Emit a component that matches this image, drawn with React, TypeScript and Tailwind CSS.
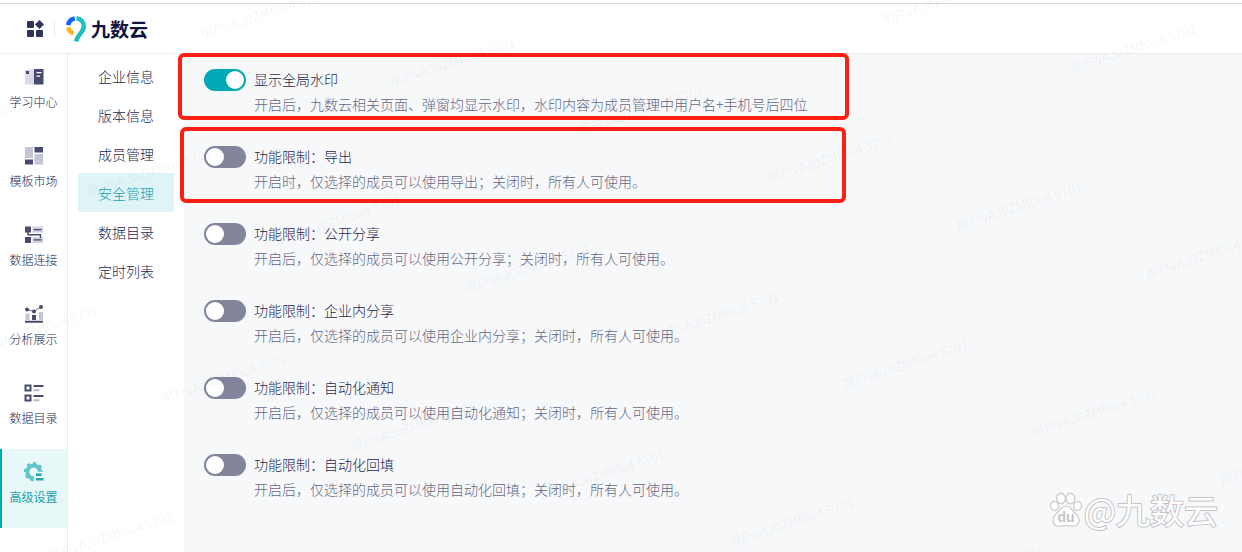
import { useState } from 'react';
import type { ReactNode } from 'react';

interface Setting {
  id: string;
  title: string;
  desc: string;
}

const settings: Setting[] = [
  { id: 'watermark', title: '显示全局水印', desc: '开启后，九数云相关页面、弹窗均显示水印，水印内容为成员管理中用户名+手机号后四位' },
  { id: 'export', title: '功能限制：导出', desc: '开启时，仅选择的成员可以使用导出；关闭时，所有人可使用。' },
  { id: 'public-share', title: '功能限制：公开分享', desc: '开启后，仅选择的成员可以使用公开分享；关闭时，所有人可使用。' },
  { id: 'inner-share', title: '功能限制：企业内分享', desc: '开启后，仅选择的成员可以使用企业内分享；关闭时，所有人可使用。' },
  { id: 'auto-notice', title: '功能限制：自动化通知', desc: '开启后，仅选择的成员可以使用自动化通知；关闭时，所有人可使用。' },
  { id: 'auto-fill', title: '功能限制：自动化回填', desc: '开启后，仅选择的成员可以使用自动化回填；关闭时，所有人可使用。' },
];

const menu = ['企业信息', '版本信息', '成员管理', '安全管理', '数据目录', '定时列表'];

function Icon({ children }: { children: ReactNode }) {
  return (
    <svg viewBox="0 0 20 20" className="h-5 w-5" aria-hidden="true">
      {children}
    </svg>
  );
}

const modules: { name: string; icon: ReactNode }[] = [
  {
    name: '学习中心',
    icon: (
      <Icon>
        <path fill="#d9dae8" d="M1 2.5h9v15H1z" />
        <path fill="#484b6e" d="M2 4h3v3H2zM10 2h9.500v15.500H10z" />
        <path fill="#fff" d="M12.500 5h5v1.300h-5zM12.500 8.500h3.500v1.300h-3.500z" />
      </Icon>
    ),
  },
  {
    name: '模板市场',
    icon: (
      <Icon>
        <path fill="#c3c4d4" d="M1 1h8v11H1zM10.500 8H19v10.500h-8.500z" />
        <path fill="#484b6e" d="M10.500 1H19v5.500h-8.500zM1 13.500h8v5H1z" />
      </Icon>
    ),
  },
  {
    name: '数据连接',
    icon: (
      <Icon>
        <path fill="#d0d1df" d="M8.500 1.500H19v6H8.500zM8.500 12H19v6H8.500z" />
        <path fill="#484b6e" d="M1 1.500h6v6H1zM1 12h6v6H1zM9.500 4h8v1.300h-8zM9.500 14.300h8v1.300h-8z" />
        <path fill="none" stroke="#484b6e" strokeWidth="1.400" d="M4 7v2.800h12.500V13" />
      </Icon>
    ),
  },
  {
    name: '分析展示',
    icon: (
      <Icon>
        <path fill="#c3c4d4" d="M1.500 9.500h4V16h-4zM15 8h4v8h-4z" />
        <path fill="#484b6e" d="M8 11h4v5H8zM1 16.800h18v2H1z" />
        <path fill="none" stroke="#74768f" strokeWidth="1" d="M3 5.500 10 7.500 17 3" />
        <g fill="#484b6e">
          <circle cx="3" cy="5.500" r="2" />
          <circle cx="10" cy="7.500" r="2" />
          <circle cx="17" cy="3" r="2" />
        </g>
      </Icon>
    ),
  },
  {
    name: '数据目录',
    icon: (
      <Icon>
        <path fill="none" stroke="#484b6e" strokeWidth="2" d="M1.500 2.500h5v5h-5zM1.500 12.500h5v5h-5z" />
        <path fill="#484b6e" d="M9.500 2h10v2h-10zM9.500 12h10v2h-10z" />
        <path fill="#b5b7c9" d="M9.500 6.300h6v2h-6zM9.500 16.300h6v2h-6z" />
      </Icon>
    ),
  },
  {
    name: '高级设置',
    icon: (
      <Icon>
        <path
          fill="none"
          stroke="#5fc4cb"
          strokeWidth="4"
          d="M9.800 16.200A6.300 6.300 0 1 1 15.900 9.800"
        />
        <path
          fill="none"
          stroke="#5fc4cb"
          strokeWidth="2"
          strokeDasharray="3.300 3.300"
          d="M9.800 18.200A8.600 8.600 0 1 1 18.200 9.800"
        />
        <path fill="#2aa5ad" d="M12 11.500h5.500V14H12zM12 16h7.500v2.500H12z" />
      </Icon>
    ),
  },
];

// the tiled user mark, laid out on a slanted lattice
const marks = [-6, -5, -4, -3, -2, -1, 0, 1, 2, 3, 4].flatMap((i) =>
  [-2, -1, 0, 1, 2, 3, 4, 5].map((j) => ({ x: 884 + 189 * i - 114 * j, y: 12 + 48 * i + 158 * j })),
);

function Watermark() {
  return (
    <div className="pointer-events-none absolute inset-0 overflow-hidden" aria-hidden="true">
      {marks
        .filter((m) => m.x > -120 && m.x < 1920 && m.y > -10 && m.y < 1080)
        .map((m) => (
          <span
            key={`${m.x}-${m.y}`}
            className="absolute origin-bottom-left -rotate-[18deg] text-[13px] leading-4 font-normal whitespace-nowrap text-black/6"
            style={{ left: m.x, top: m.y }}
          >
            用户vAJ0ZMf0u4 5701
          </span>
        ))}
    </div>
  );
}

function Logo() {
  return (
    <div className="flex items-center gap-1">
      <svg viewBox="0 0 22 28" className="h-7 w-[22px]" fill="none" strokeWidth="4.500" aria-hidden="true">
        <path stroke="#1463ff" d="M3.200 10.200A8 8 0 0 1 9.800 3.500" />
        <path stroke="#fdb515" d="M3.200 12.500A8 8 0 0 0 8.500 18.300" />
        <path stroke="#1cbfbf" d="M11.500 3.300C16.500 4 19 7.500 18.700 12 18.200 17.500 12.500 19.500 11 26.500" />
      </svg>
      <span className="text-[19px] leading-6 font-bold text-[#10143f]">九数云</span>
    </div>
  );
}

function SettingRow({ setting, on, onToggle }: { setting: Setting; on: boolean; onToggle: () => void }) {
  return (
    <li className="flex h-[77px] gap-2">
      <input
        id={setting.id}
        type="checkbox"
        role="switch"
        checked={on}
        onChange={onToggle}
        aria-describedby={`${setting.id}-desc`}
        className="peer sr-only"
      />
      <label
        htmlFor={setting.id}
        aria-label={setting.title}
        className="flex h-[22px] w-[42px] shrink-0 cursor-pointer items-center rounded-full bg-[#82859b] p-[2px] peer-checked:justify-end peer-checked:bg-[#00a9b5]"
      >
        <span className="h-[18px] w-[18px] rounded-full bg-white" />
      </label>
      <div className="min-w-0 text-sm">
        <label htmlFor={setting.id} className="block text-[#24284e]">
          {setting.title}
        </label>
        <p id={`${setting.id}-desc`} className="mt-[5px] text-[#646985]">
          {setting.desc}
        </p>
      </div>
    </li>
  );
}

function Signature() {
  return (
    <div className="absolute right-6 bottom-6 flex items-center gap-[2px]">
      <svg viewBox="0 0 32 36" className="h-9 w-8" aria-hidden="true">
        <g fill="#fff" stroke="#c9cacc" strokeWidth="1.200">
          <ellipse cx="4.500" cy="14" rx="3.800" ry="4.500" transform="rotate(-15 4.500 14)" />
          <ellipse cx="11" cy="6.500" rx="4.300" ry="5.300" />
          <ellipse cx="20.500" cy="6.500" rx="4.300" ry="5.300" />
          <ellipse cx="27.500" cy="14" rx="3.800" ry="4.500" transform="rotate(15 27.500 14)" />
          <path d="M16 14c4 0 5.500 3.500 8 6 3 2.800 5.500 5 5 9-.5 4-3.500 5.500-7 5.200-2-.2-4-.7-6-.7s-4 .5-6 .7c-3.500.3-6.500-1.200-7-5.200-.5-4 2-6.200 5-9 2.500-2.500 4-6 8-6z" />
        </g>
        <text x="16" y="30" textAnchor="middle" fontSize="14" fontWeight="700" fontFamily="Liberation Sans, sans-serif" fill="#c4c5c8">
          du
        </text>
      </svg>
      <span className="text-[34px] leading-9 font-normal text-white [paint-order:stroke_fill] [-webkit-text-stroke:2px_#c4c5c8]">
        @九数云
      </span>
    </div>
  );
}

export default function App() {
  const [enabled, setEnabled] = useState<string[]>(['watermark']);
  const [module, setModule] = useState('高级设置');
  const [page, setPage] = useState('安全管理');

  const toggle = (id: string) => {
    setEnabled((prev) => (prev.includes(id) ? prev.filter((v) => v !== id) : [...prev, id]));
  };

  return (
    <div className="relative flex min-h-screen flex-col overflow-hidden bg-white font-['Noto_Sans_CJK_SC',sans-serif] font-light text-[#24284e]">
      <header className="mt-[3px] flex h-[51px] items-center border-t border-b border-t-[#d4d4d4] border-b-[#ebecef] pl-[26px]">
        <button type="button" aria-label="应用" className="cursor-pointer">
          <svg viewBox="0 0 18 18" className="h-[18px] w-[18px]" fill="#30345a" aria-hidden="true">
            <rect x="1" y="1" width="7" height="7" rx="1" />
            <rect x="1" y="10" width="7" height="7" rx="1" />
            <rect x="10" y="10" width="7" height="7" rx="1" />
            <path d="M13.500 0 18 4.500 13.500 9 9 4.500z" />
          </svg>
        </button>
        <span className="mx-[10px] h-4 w-px bg-[#ebecef]" />
        <Logo />
      </header>

      <div className="flex flex-1">
        <nav className="w-[68px] shrink-0 border-r border-[#ebecef]">
          {modules.map((m) => (
            <button
              key={m.name}
              type="button"
              onClick={() => setModule(m.name)}
              className={`flex h-[79px] w-full cursor-pointer flex-col items-center gap-[5px] pt-[13px] text-xs leading-5 ${
                m.name === module ? 'bg-[#e8f7f8] font-normal text-[#1d9fa8] shadow-[inset_2px_0_0_#00a9b5]' : ''
              }`}
            >
              {m.icon}
              <span>{m.name}</span>
            </button>
          ))}
        </nav>

        <nav className="w-[116px] shrink-0 px-[10px] pt-[2px]">
          {menu.map((name) => (
            <button
              key={name}
              type="button"
              onClick={() => setPage(name)}
              className={`block h-[39px] w-full cursor-pointer text-sm ${
                name === page ? 'bg-[#dff4f6] text-[#1d9fa8]' : ''
              }`}
            >
              {name}
            </button>
          ))}
        </nav>

        <main className="relative min-w-0 flex-1 bg-[#f7f8fa] pt-[15px] pl-5">
          <ul>
            {settings.map((s) => (
              <SettingRow key={s.id} setting={s} on={enabled.includes(s.id)} onToggle={() => toggle(s.id)} />
            ))}
          </ul>
          <div className="pointer-events-none absolute -top-px -left-[6px] h-[67px] w-[671px] rounded-md border-4 border-[#fe1f12]" />
          <div className="pointer-events-none absolute top-[73px] -left-1 h-[76px] w-[666px] rounded-md border-4 border-[#fe1f12]" />
        </main>
      </div>

      <Watermark />
      <Signature />
    </div>
  );
}
